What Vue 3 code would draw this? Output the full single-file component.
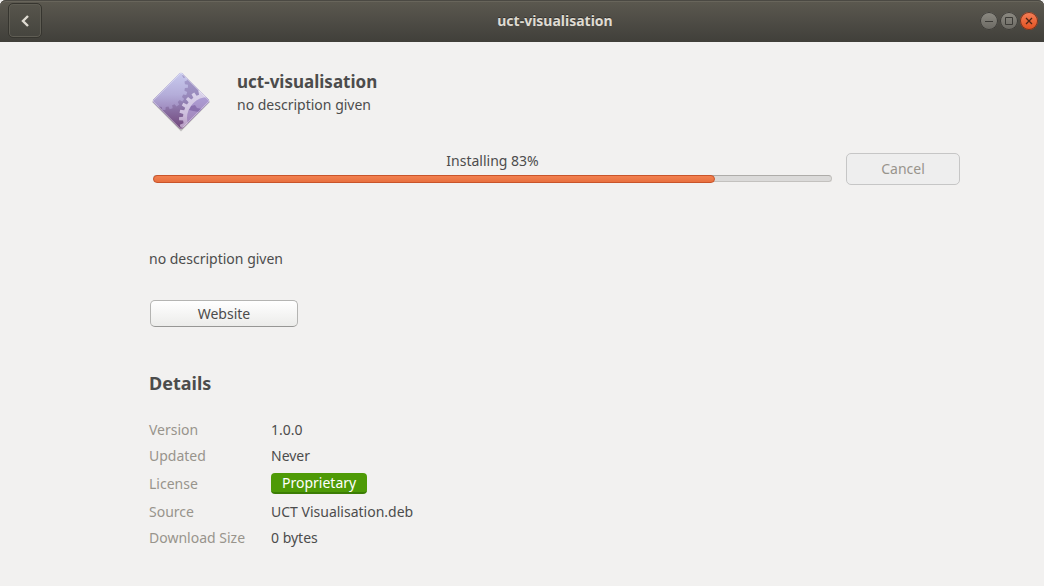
<script setup>
import { ref } from 'vue'

const name = 'uct-visualisation'
const summary = 'no description given'
const progress = ref(83)

const details = [
  { label: 'Version', value: '1.0.0' },
  { label: 'Updated', value: 'Never' },
  { label: 'License', value: 'Proprietary', badge: true },
  { label: 'Source', value: 'UCT Visualisation.deb' },
  { label: 'Download Size', value: '0 bytes' },
]

// Outline of a toothed wheel around (cx, cy)
function gear(cx, cy, inner, outer, teeth, phase) {
  const step = (Math.PI * 2) / teeth
  const points = []
  for (let i = 0; i < teeth; i++) {
    const a = i * step + phase
    for (const [r, f] of [[inner, 0], [inner, 0.42], [outer, 0.5], [outer, 0.92]]) {
      points.push((cx + r * Math.cos(a + f * step)).toFixed(2) + ' ' + (cy + r * Math.sin(a + f * step)).toFixed(2))
    }
  }
  return 'M' + points.join('L') + 'Z'
}

const bigGear = gear(12, 14, 21, 24, 20, 0.1)
const ringGear = gear(56, 46, 25, 29, 24, 0.05) + 'M35 46a21 21 0 1 0 42 0a21 21 0 1 0-42 0Z'
</script>

<template>
  <div class="window">
    <header class="titlebar">
      <button class="back" type="button" aria-label="Back">
        <svg width="16" height="16" viewBox="0 0 16 16"><path d="M11 3L6 8L11 13" fill="none" stroke="#dfdbd2" stroke-width="2.4" /></svg>
      </button>
      <span class="title">{{ name }}</span>
      <div class="controls">
        <button class="control" type="button" aria-label="Minimize">
          <svg width="18" height="18" viewBox="0 0 18 18"><path d="M5 9.5H13" stroke="#3c3b37" /></svg>
        </button>
        <button class="control" type="button" aria-label="Maximize">
          <svg width="18" height="18" viewBox="0 0 18 18"><path d="M5.500 5.500H12.500V12.500H5.500Z" fill="none" stroke="#3c3b37" /></svg>
        </button>
        <button class="control close" type="button" aria-label="Close">
          <svg width="18" height="18" viewBox="0 0 18 18"><path d="M6 6L12 12M12 6L6 12" stroke="#4b2415" stroke-width="1.3" /></svg>
        </button>
      </div>
    </header>

    <main class="content">
      <section class="app">
        <svg class="icon" width="64" height="64" viewBox="-3 -3 64 64" aria-hidden="true">
          <defs>
            <linearGradient id="base" x1="0" y1="0" x2="0" y2="1">
              <stop offset="0" stop-color="#a9a3d2" />
              <stop offset="0.5" stop-color="#9483b6" />
              <stop offset="1" stop-color="#6f4377" />
            </linearGradient>
            <linearGradient id="wheel" gradientUnits="userSpaceOnUse" x1="0" y1="0" x2="0" y2="38">
              <stop offset="0" stop-color="#c9cbef" />
              <stop offset="0.6" stop-color="#b4add9" />
              <stop offset="1" stop-color="#9e89bd" />
            </linearGradient>
            <linearGradient id="ring" gradientUnits="userSpaceOnUse" x1="0" y1="16" x2="0" y2="58">
              <stop offset="0" stop-color="#dcd7ee" />
              <stop offset="0.6" stop-color="#cfc0de" />
              <stop offset="1" stop-color="#b294bd" />
            </linearGradient>
            <linearGradient id="face" gradientUnits="userSpaceOnUse" x1="0" y1="26" x2="0" y2="58">
              <stop offset="0" stop-color="#ac9cd3" />
              <stop offset="1" stop-color="#a07fb2" />
            </linearGradient>
            <clipPath id="diamond"><path d="M27.500 1.500Q29 0 30.500 1.500L56.500 27.500Q58 29 56.500 30.500L30.500 56.500Q29 58 27.500 56.500L1.500 30.500Q0 29 1.500 27.500Z" /></clipPath>
          </defs>
          <path d="M29 1.500L58 30L29 59.500L0 30Z" fill="#000" opacity="0.2" />
          <g clip-path="url(#diamond)">
            <path d="M0 0H58V58H0Z" fill="url(#base)" />
            <path :d="bigGear" fill="url(#wheel)" />
            <circle cx="56" cy="46" r="22" fill="url(#face)" />
            <path d="M37 38L39 34L43 33L45 36L50 37L47 40L41 39Z" fill="#8a70ae" />
            <path :d="ringGear" fill="url(#ring)" fill-rule="evenodd" />
          </g>
          <path d="M29 1L57 29L29 57L1 29Z" fill="none" stroke="#fff" stroke-opacity="0.3" />
        </svg>
        <div class="heading">
          <h1>{{ name }}</h1>
          <p>{{ summary }}</p>
        </div>
      </section>

      <section class="install">
        <div class="progress">
          <span id="progress-label">Installing {{ progress }}%</span>
          <div class="track" role="progressbar" aria-labelledby="progress-label" :aria-valuenow="progress" aria-valuemin="0" aria-valuemax="100">
            <div class="fill" :style="{ width: progress + '%' }"></div>
          </div>
        </div>
        <button class="cancel" type="button" disabled>Cancel</button>
      </section>

      <p class="description">{{ summary }}</p>
      <button class="website" type="button">Website</button>

      <h2>Details</h2>
      <dl class="details">
        <div v-for="row in details" :key="row.label" class="row" :class="{ tall: row.badge }">
          <dt>{{ row.label }}</dt>
          <dd><span :class="{ badge: row.badge }">{{ row.value }}</span></dd>
        </div>
      </dl>
    </main>
  </div>
</template>

<style>
body {
  background: #f2f1f0;
}
</style>

<style scoped>
.window {
  min-height: 100vh;
  box-sizing: border-box;
  background: #f2f1f0;
  color: #4c4c4c;
  font: 14px/20px "Noto Sans", sans-serif;
}

button {
  box-sizing: border-box;
  padding: 0;
  font: inherit;
  color: inherit;
}

h1,
h2,
p,
dl,
dd {
  margin: 0;
}

.titlebar {
  display: flex;
  align-items: center;
  height: 42px;
  box-sizing: border-box;
  padding: 0 6px 1px 8px;
  background: linear-gradient(#5c5950, #403f3a);
  border-radius: 6px 6px 0 0;
  box-shadow: inset 0 1px #4b4943, inset 0 2px #68655b;
}

.back {
  display: flex;
  align-items: center;
  justify-content: center;
  width: 34px;
  height: 35px;
  border: 1px solid #36352f;
  border-radius: 5px;
  background: linear-gradient(#57554c, #45443e);
  box-shadow: inset 0 0 0 1px #5f5d54;
}

.title {
  flex: 1;
  padding-left: 88px;
  text-align: center;
  font-weight: 700;
  color: #dfdbd2;
  text-shadow: 0 -1px #34332f;
}

.controls {
  display: flex;
  gap: 2px;
}

.control {
  width: 18px;
  height: 18px;
  border: 0;
  border-radius: 50%;
  background: linear-gradient(#8d8b83, #6a6862);
  box-shadow: inset 0 0 0 1px #3c3b37;
}

.control svg {
  display: block;
}

.close {
  background: linear-gradient(#f58059, #e2501f);
  box-shadow: inset 0 0 0 1px #6d3522;
}

.content {
  padding: 27px 84px 24px 149px;
}

.app {
  display: flex;
  gap: 24px;
}

h1 {
  font-size: 17px;
  line-height: 26px;
}

.install {
  display: flex;
  align-items: center;
  gap: 14px;
  margin-top: 20px;
}

.progress {
  flex: 1;
  padding: 0 0 3px 4px;
  text-align: center;
}

.progress span {
  display: block;
  line-height: 16px;
}

.track {
  height: 7px;
  margin-top: 6px;
  box-sizing: border-box;
  border: 1px solid #c3c1be;
  border-top-color: #aeaca9;
  border-radius: 4px;
  background: #dbdad9;
}

.fill {
  height: 8px;
  margin: -1px;
  box-sizing: border-box;
  border: 1px solid #c9542a;
  border-radius: 4px;
  background: linear-gradient(#f2804f, #e8703f);
}

.cancel {
  width: 114px;
  height: 32px;
  border: 1px solid #c6c6c6;
  border-radius: 5px;
  background: #eeeeee;
  color: #98948c;
}

.description {
  margin-top: 64px;
}

.website {
  display: block;
  width: 148px;
  height: 27px;
  margin: 31px 0 0 1px;
  border: 1px solid #b4b4b2;
  border-bottom-color: #979795;
  border-radius: 5px;
  background: linear-gradient(#ffffff, #ececea);
}

h2 {
  margin-top: 44px;
  font-size: 18px;
  line-height: 24px;
}

.details {
  margin-top: 22px;
}

.row {
  display: grid;
  grid-template-columns: 122px 1fr;
  align-items: center;
  height: 26px;
}

.tall {
  height: 30px;
}

.tall dd {
  padding-bottom: 2px;
}

dt {
  color: #98948c;
}

.badge {
  display: block;
  width: fit-content;
  box-sizing: border-box;
  height: 21px;
  padding: 0 11px;
  line-height: 19px;
  border-bottom: 2px solid #3b7d04;
  border-radius: 4px;
  background: #4e9a06;
  color: #fff;
}
</style>
